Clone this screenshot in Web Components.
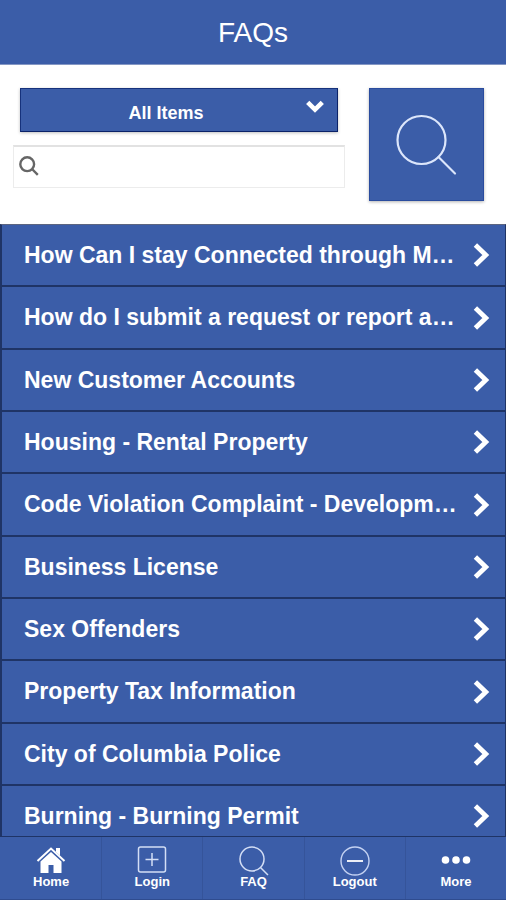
<!DOCTYPE html>
<html lang="en">
<head>
<meta charset="utf-8">
<meta name="viewport" content="width=device-width, initial-scale=1">
<title>FAQs</title>
<style>
    body {
        margin: 0;
        font-family: "Liberation Sans", Arial, sans-serif;
        color: #fff;
        background: #fff;
        --blue: #3b5da8;
        --line: #1f3466;
    }
</style>
</head>
<body>
<faq-app></faq-app>

<script>
class AppHeader extends HTMLElement {
    constructor() {
        super();
        this.attachShadow({mode: "open"}).innerHTML = `
        <style>
            :host {
                display: block;
                background: var(--blue);
                border-bottom: 1px solid #8497c4;
            }
            h1 {
                margin: 0;
                padding-top: 2px;
                font-size: 28px;
                font-weight: 400;
                line-height: 62px;
                text-align: center;
            }
        </style>
        <h1><slot></slot></h1>`;
    }
}

class CategorySelect extends HTMLElement {
    constructor() {
        super();
        this.attachShadow({mode: "open"}).innerHTML = `
        <style>
            :host {
                display: grid;
                margin: 0 7px;
            }
            select, svg {
                grid-area: 1 / 1;
            }
            select {
                appearance: none;
                box-sizing: border-box;
                width: 100%;
                height: 44px;
                margin: 0;
                padding: 6px 40px 0 14px;
                border: 1px solid #16327c;
                border-right-color: #0b2268;
                border-bottom-color: #0b2268;
                border-radius: 0;
                background: var(--blue);
                box-shadow: 0 1px 3px rgba(0, 0, 0, 0.25);
                color: #fff;
                font: bold 18px "Liberation Sans", Arial, sans-serif;
                text-align-last: center;
            }
            svg {
                justify-self: end;
                margin: 12px 14px 0 0;
                pointer-events: none;
            }
        </style>
        <select aria-label="Category">
            <option>All Items</option>
        </select>
        <svg width="18" height="14" viewBox="0 0 18 14" fill="none" stroke="#fff" stroke-width="4.6">
            <path d="M1.7 2.4 L9 9.6 L16.3 2.4"/>
        </svg>`;
    }
}

class SearchField extends HTMLElement {
    constructor() {
        super();
        this.attachShadow({mode: "open"}).innerHTML = `
        <style>
            :host {
                display: block;
            }
            label {
                display: flex;
                align-items: center;
                box-sizing: border-box;
                height: 43px;
                padding: 0 0 2px 5px;
                border: 1px solid #ececec;
                border-top: 2px solid #e2e2e2;
                background: #fff;
            }
            input {
                flex: 1;
                min-width: 0;
                height: 100%;
                box-sizing: border-box;
                padding: 0 8px;
                border: 0;
                outline: 0;
                background: none;
                color: #333;
                font: 18px "Liberation Sans", Arial, sans-serif;
            }
        </style>
        <label>
            <svg width="20" height="20" viewBox="0 0 20 20" fill="none" stroke="#666" stroke-width="2.4">
                <circle cx="8.2" cy="8.2" r="6.9"/>
                <path d="M13 13 L18.8 18.8"/>
            </svg>
            <input type="text" aria-label="Search">
        </label>`;
    }
}

class SearchButton extends HTMLElement {
    constructor() {
        super();
        this.attachShadow({mode: "open"}).innerHTML = `
        <style>
            :host {
                display: block;
            }
            button {
                display: flex;
                align-items: center;
                justify-content: center;
                width: 115px;
                height: 113px;
                padding: 0;
                border: 1px solid #2a4c9e;
                background: var(--blue);
                box-shadow: 0 1px 3px rgba(0, 0, 0, 0.3);
                cursor: pointer;
            }
        </style>
        <button type="button" aria-label="Search">
            <svg width="62" height="62" viewBox="0 0 62 62" fill="none" stroke="#dce6fb" stroke-width="2.2" stroke-linecap="round">
                <circle cx="25.5" cy="26" r="24"/>
                <path d="M42.5 43 L59 59.5"/>
            </svg>
        </button>`;
    }
}

class FaqItem extends HTMLElement {
    constructor() {
        super();
        this.attachShadow({mode: "open"}).innerHTML = `
        <style>
            :host {
                display: block;
                min-width: 0;
            }
            a {
                display: flex;
                align-items: center;
                justify-content: space-between;
                box-sizing: border-box;
                height: 100%;
                padding: 0 15px 0 22px;
                border-bottom: 2px solid var(--line);
                color: #fff;
                font-size: 23px;
                font-weight: bold;
                text-decoration: none;
            }
            span {
                overflow: hidden;
                white-space: nowrap;
                text-overflow: ellipsis;
            }
            svg {
                flex: none;
            }
        </style>
        <a href="#">
            <span><slot></slot></span>
            <svg width="17" height="24" viewBox="0 0 17 24" fill="none" stroke="#fff" stroke-width="4.8">
                <path d="M2.4 2 L12.8 12 L2.4 22"/>
            </svg>
        </a>`;
    }
}

class FaqList extends HTMLElement {
    constructor() {
        super();
        this.attachShadow({mode: "open"}).innerHTML = `
        <style>
            :host {
                display: grid;
                grid-template-columns: minmax(0, 1fr);
                grid-auto-rows: 62px 63px 62px;
                box-sizing: border-box;
                overflow: hidden;
                border: 2px solid var(--line);
                border-width: 1px 1px 1px 2px;
                border-top-color: #5c6580;
                background: var(--blue);
            }
        </style>
        <slot></slot>`;
    }
}

const tabIcons = {
    home: `<svg width="30" height="28" viewBox="0 0 30 28">
        <path fill="#fff" d="M4.5 15.5 L15 6 L25.5 15.5 V27 H17.5 V19 H12.5 V27 H4.5 Z M20 2 H24 V9.5 L20 6 Z"/>
        <path fill="none" stroke="#fff" stroke-width="2" d="M1.5 15 L15 2.5 L28.5 15"/>
    </svg>`,
    login: `<svg width="30" height="28" viewBox="0 0 30 28" fill="none" stroke="#d3def5" stroke-width="1.5">
        <rect x="1.5" y="1" width="27" height="25" rx="2"/>
        <path d="M15 7 V20 M8.5 13.5 H21.5"/>
    </svg>`,
    faq: `<svg width="30" height="30" viewBox="0 0 30 30" fill="none" stroke="#d3def5" stroke-width="1.5">
        <circle cx="13" cy="13" r="12"/>
        <path d="M21.5 21.5 L29 29"/>
    </svg>`,
    logout: `<svg width="30" height="30" viewBox="0 0 30 30" fill="none" stroke="#c4d2f2" stroke-width="1.4">
        <circle cx="15" cy="15" r="14"/>
        <path stroke="#fff" stroke-width="1.8" d="M7 15 H23"/>
    </svg>`,
    more: `<svg width="30" height="28" viewBox="0 0 30 28" fill="#fff">
        <circle cx="4.5" cy="14" r="3.8"/>
        <circle cx="15" cy="14" r="3.8"/>
        <circle cx="25.5" cy="14" r="3.8"/>
    </svg>`
};

class TabItem extends HTMLElement {
    constructor() {
        super();
        this.attachShadow({mode: "open"});
    }

    connectedCallback() {
        this.shadowRoot.innerHTML = `
        <style>
            :host {
                flex: 1;
                border-left: 1px solid #35549a;
            }
            :host(:first-child) {
                border-left-color: transparent;
            }
            a {
                display: flex;
                flex-direction: column;
                align-items: center;
                padding-top: 9px;
                color: #fff;
                font-size: 13px;
                font-weight: bold;
                line-height: 14px;
                text-decoration: none;
            }
            .icon {
                height: 29px;
            }
            svg {
                display: block;
            }
        </style>
        <a href="#">
            <div class="icon">${tabIcons[this.getAttribute("icon")]}</div>
            <slot></slot>
        </a>`;
    }
}

class TabBar extends HTMLElement {
    constructor() {
        super();
        this.attachShadow({mode: "open"}).innerHTML = `
        <style>
            :host {
                display: block;
                background: var(--blue);
            }
            nav {
                display: flex;
                box-sizing: border-box;
                height: 63px;
                border-bottom: 1px solid #2f4c8f;
            }
        </style>
        <nav><slot></slot></nav>`;
    }
}

class FaqApp extends HTMLElement {
    constructor() {
        super();
        this.attachShadow({mode: "open"}).innerHTML = `
        <style>
            :host {
                display: flex;
                flex-direction: column;
                height: 100vh;
            }
            .filters {
                display: flex;
                gap: 24px;
                padding: 23px 22px 23px 13px;
            }
            .fields {
                display: flex;
                flex: 1;
                flex-direction: column;
                gap: 13px;
                min-width: 0;
            }
            faq-list {
                flex: 1;
                min-height: 0;
            }
        </style>
        <app-header>FAQs</app-header>
        <div class="filters">
            <div class="fields">
                <category-select></category-select>
                <search-field></search-field>
            </div>
            <search-button></search-button>
        </div>
        <faq-list>
            <faq-item>How Can I stay Connected through M…</faq-item>
            <faq-item>How do I submit a request or report a…</faq-item>
            <faq-item>New Customer Accounts</faq-item>
            <faq-item>Housing - Rental Property</faq-item>
            <faq-item>Code Violation Complaint - Developm…</faq-item>
            <faq-item>Business License</faq-item>
            <faq-item>Sex Offenders</faq-item>
            <faq-item>Property Tax Information</faq-item>
            <faq-item>City of Columbia Police</faq-item>
            <faq-item>Burning - Burning Permit</faq-item>
        </faq-list>
        <tab-bar>
            <tab-item icon="home">Home</tab-item>
            <tab-item icon="login">Login</tab-item>
            <tab-item icon="faq">FAQ</tab-item>
            <tab-item icon="logout">Logout</tab-item>
            <tab-item icon="more">More</tab-item>
        </tab-bar>`;
    }
}

customElements.define("app-header", AppHeader)
customElements.define("category-select", CategorySelect)
customElements.define("search-field", SearchField)
customElements.define("search-button", SearchButton)
customElements.define("faq-item", FaqItem)
customElements.define("faq-list", FaqList)
customElements.define("tab-item", TabItem)
customElements.define("tab-bar", TabBar)
customElements.define("faq-app", FaqApp)
</script>
</body>
</html>
